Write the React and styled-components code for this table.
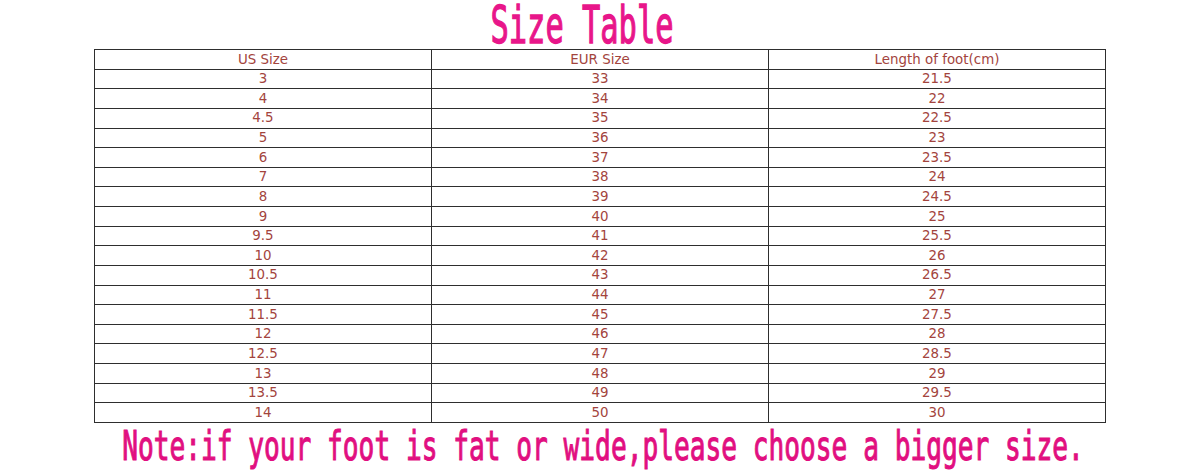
import React from "react";
import styled, { createGlobalStyle } from "styled-components";

const GlobalStyle = createGlobalStyle`
  html, body {
    margin: 0;
    padding: 0;
    background: #ffffff;
    overflow: hidden;
  }
`;

const rows = [
  ["3", "33", "21.5"],
  ["4", "34", "22"],
  ["4.5", "35", "22.5"],
  ["5", "36", "23"],
  ["6", "37", "23.5"],
  ["7", "38", "24"],
  ["8", "39", "24.5"],
  ["9", "40", "25"],
  ["9.5", "41", "25.5"],
  ["10", "42", "26"],
  ["10.5", "43", "26.5"],
  ["11", "44", "27"],
  ["11.5", "45", "27.5"],
  ["12", "46", "28"],
  ["12.5", "47", "28.5"],
  ["13", "48", "29"],
  ["13.5", "49", "29.5"],
  ["14", "50", "30"],
];

const Page = styled.div`
  width: 1200px;
  height: 475px;
  display: flex;
  flex-direction: column;
  align-items: center;
`;

const Heading = styled.div`
  height: 49px;
  width: 100%;
  display: flex;
  justify-content: center;
  align-items: center;
  padding-right: 36px;
  padding-top: 2px;
  box-sizing: border-box;
`;

// monospace text stretched tall, like the condensed gothic lettering
const Stretched = styled.span`
  display: inline-block;
  font-family: "DejaVu Sans Mono", "Liberation Mono", monospace;
  font-size: ${(p) => p.size}px;
  line-height: 0.85;
  color: ${(p) => p.color};
  -webkit-text-stroke: ${(p) => p.weight}px ${(p) => p.color};
  transform: scaleY(${(p) => p.stretch});
  white-space: pre;
`;

const Table = styled.table`
  width: 1012px;
  height: 374px;
  border-collapse: collapse;
  table-layout: fixed;
  font-family: "DejaVu Sans", Verdana, sans-serif;
  font-size: 13.4px;
  color: #a3443d;
`;

const Cell = styled.td`
  border: 1px solid #2e2e2e;
  padding: 0;
  text-align: center;
  line-height: 1;
`;

const Note = styled.div`
  height: 52px;
  width: 100%;
  display: flex;
  justify-content: center;
  align-items: center;
  padding-bottom: 6px;
  padding-left: 6px;
  box-sizing: border-box;
`;

export default function App() {
  return (
    <Page>
      <GlobalStyle />
      <Heading>
        <Stretched size={30.4} stretch={1.67} weight={0.8} color="#e8168a">
          Size Table
        </Stretched>
      </Heading>
      <Table>
        <tbody>
          <tr>
            <Cell>US Size</Cell>
            <Cell>EUR Size</Cell>
            <Cell>Length of foot(cm)</Cell>
          </tr>
          {rows.map((r) => (
            <tr key={r[0]}>
              {r.map((v, i) => (
                <Cell key={i}>{v}</Cell>
              ))}
            </tr>
          ))}
        </tbody>
      </Table>
      <Note>
        <Stretched size={26.2} stretch={1.55} weight={0.7} color="#e10f80">
          Note:if your foot is fat or wide,please choose a bigger size.
        </Stretched>
      </Note>
    </Page>
  );
}
